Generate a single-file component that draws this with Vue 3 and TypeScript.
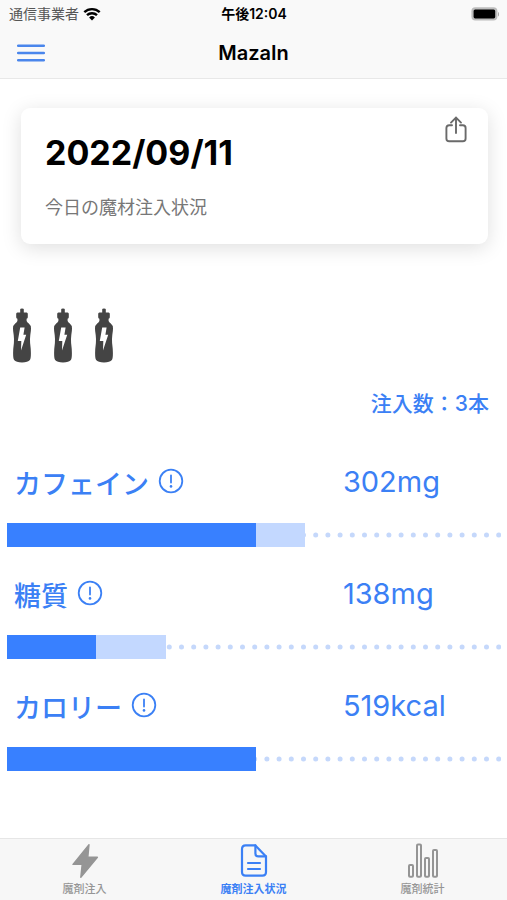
<script setup lang="ts">
interface Metric {
  id: string
  label: string
  value: string
  solid: number
  light: number
}

const metrics: Metric[] = [
  { id: 'caffeine', label: 'カフェイン', value: '302mg', solid: 50.5, light: 60.4 },
  { id: 'sugar', label: '糖質', value: '138mg', solid: 18, light: 32.1 },
  { id: 'calorie', label: 'カロリー', value: '519kcal', solid: 50.5, light: 50.5 },
]

const bottles = 3
</script>

<template>
  <div class="screen">
    <header class="top">
      <div class="status">
        <span class="carrier">
          通信事業者
          <svg class="wifi" viewBox="0 0 18 14" aria-hidden="true">
            <path d="M1.3 5.2A11.2 11.2 0 0 1 16.7 5.2" />
            <path d="M4 8.2A7.2 7.2 0 0 1 14 8.2" />
            <path class="dot" d="M9 13.4L6.1 10.4A4.2 4.2 0 0 1 11.9 10.4Z" />
          </svg>
        </span>
        <span class="clock">午後12:04</span>
        <svg class="battery" viewBox="0 0 28 14" aria-hidden="true">
          <rect x="0.4" y="0.2" width="26" height="13.4" rx="4" fill="#bcbcbc" />
          <path d="M27 5v4.4q1.2-.8 1.2-2.2T27 5z" fill="#a8a8a8" />
          <rect x="2.6" y="2.4" width="21.6" height="9" rx="1.6" fill="#000" />
        </svg>
      </div>
      <nav class="bar">
        <button class="menu" type="button" aria-label="メニュー">
          <svg viewBox="0 0 28 18" aria-hidden="true">
            <path d="M1.2 1.8H26.8M1.2 9H26.8M1.2 16.2H26.8" />
          </svg>
        </button>
        <h1>MazaIn</h1>
      </nav>
    </header>

    <main>
      <section class="card">
        <div>
          <h2>2022/09/11</h2>
          <p>今日の魔材注入状況</p>
        </div>
        <button class="share" type="button" aria-label="共有">
          <svg viewBox="0 0 22 27" aria-hidden="true">
            <path d="M7 9.2H4.2Q1.4 9.2 1.4 12V22.4Q1.4 25.2 4.2 25.2H17.8Q20.6 25.2 20.6 22.4V12Q20.6 9.2 17.8 9.2H15" />
            <path d="M11 17V1.8M6 6.6L11 1.6L16 6.6" />
          </svg>
        </button>
      </section>

      <div class="bottles">
        <svg v-for="n in bottles" :key="n" viewBox="0 0 20 55" aria-hidden="true">
          <path
            fill="#444"
            d="M8.2 1.2Q8.2 0.4 10 0.4Q11.8 0.4 11.8 1.2V4.4H14.6Q15.8 4.6 15.8 5.8V9.2Q15.8 10.4 14.6 10.8V13Q15 14.4 16.8 15.4Q19 17 19 20.4Q19 23 18.3 27Q17.8 31 18.1 35Q18.9 41 18.9 45Q18.9 50.6 17.9 52Q16 54.4 10 54.4Q4 54.4 2.1 52Q1.1 50.6 1.1 45Q1.1 41 1.9 35Q2.2 31 1.7 27Q1 23 1 20.4Q1 17 3.2 15.4Q5 14.4 5.4 13V10.8Q4.2 10.4 4.2 9.2V5.8Q4.2 4.6 5.4 4.4H8.2Z"
          />
          <path fill="#fff" d="M8.2 19.4H12.6L11.4 26.8H14.2L9 42.4L9.3 33H5.8Z" />
        </svg>
      </div>

      <p class="count">注入数：3本</p>

      <section class="metrics">
        <article v-for="m in metrics" :key="m.id" class="metric">
          <div class="row">
            <div class="name">
              <h3 :id="m.id">{{ m.label }}</h3>
              <button class="info" type="button" :aria-label="m.label">
                <svg viewBox="0 0 26 26" aria-hidden="true">
                  <circle cx="13" cy="13" r="11.3" />
                  <path d="M13 7.4V14.6" />
                  <circle class="point" cx="13" cy="18.4" r="1.3" />
                </svg>
              </button>
            </div>
            <span class="value">{{ m.value }}</span>
          </div>
          <div class="track" role="img" :aria-labelledby="m.id">
            <svg class="dots" aria-hidden="true">
              <line x1="0" y1="12" x2="100%" y2="12" />
            </svg>
            <div class="fill light" :style="{ width: m.light + '%' }"></div>
            <div class="fill solid" :style="{ width: m.solid + '%' }"></div>
          </div>
        </article>
      </section>
    </main>

    <footer class="tabs">
      <a href="#inject">
        <svg viewBox="0 0 36 36" aria-hidden="true">
          <path
            fill="currentColor"
            stroke="currentColor"
            stroke-width="1.4"
            stroke-linejoin="round"
            d="M22 1.6L6 21.4H15.2L13.8 34.4L30.4 14.2H20.8Z"
          />
        </svg>
        <span>魔剤注入</span>
      </a>
      <a href="#status" class="active" aria-current="page">
        <svg viewBox="0 0 36 36" aria-hidden="true">
          <g fill="none" stroke="currentColor" stroke-width="2.2" stroke-linejoin="round" stroke-linecap="round">
            <path d="M19.4 2.4H9.6Q6 2.4 6 6V29Q6 32.6 9.6 32.6H26.4Q30 32.6 30 29V13.4Z" />
            <path d="M19.4 2.4V10.4Q19.4 13.4 22.4 13.4H30" />
            <path d="M12 20H24M12 26H24" />
          </g>
        </svg>
        <span>魔剤注入状況</span>
      </a>
      <a href="#stats">
        <svg viewBox="0 0 36 36" aria-hidden="true">
          <g fill="none" stroke="currentColor" stroke-width="2">
            <rect x="4" y="22" width="4" height="11.8" rx="1" />
            <rect x="12" y="1.6" width="4" height="32.2" rx="1" />
            <rect x="20" y="15" width="4" height="18.8" rx="1" />
            <rect x="28" y="7" width="4" height="26.8" rx="1" />
          </g>
        </svg>
        <span>魔剤統計</span>
      </a>
    </footer>
  </div>
</template>

<style>
body {
  background: #fff;
}
</style>

<style scoped>
.screen {
  display: flex;
  flex-direction: column;
  min-height: 100vh;
  font-family: Inter, 'Noto Sans CJK JP', sans-serif;
  color: #000;
}

h1,
h2,
h3,
p {
  margin: 0;
}

button {
  display: block;
  margin: 0;
  padding: 0;
  border: 0;
  background: none;
}

svg {
  display: block;
}

.top {
  background: #f9f9f9;
  border-bottom: 1px solid #e8e8e8;
}

.status,
.bar {
  display: grid;
  grid-template-columns: 1fr auto 1fr;
  align-items: center;
}

.status {
  height: 27px;
  padding: 0 8px 0 9px;
  font-size: 14px;
  line-height: 18px;
}

.carrier {
  display: flex;
  align-items: center;
  gap: 4px;
  color: #555;
}

.wifi {
  width: 18px;
  height: 14px;
  fill: none;
  stroke: #000;
  stroke-width: 2.4;
}

.wifi .dot {
  fill: #000;
  stroke: none;
}

.clock {
  font-weight: 600;
}

.battery {
  width: 28px;
  height: 14px;
  justify-self: end;
}

.bar {
  height: 51px;
  padding: 0 17px;
}

.menu svg {
  width: 28px;
  height: 18px;
  fill: none;
  stroke: #4a86ec;
  stroke-width: 2.5;
  stroke-linecap: round;
}

h1 {
  font-size: 20px;
  font-weight: 600;
}

main {
  flex: 1;
}

.card {
  display: flex;
  justify-content: space-between;
  align-items: flex-start;
  margin: 29px 19px 0 21px;
  padding: 8px 21px 23px 24px;
  border-radius: 9px;
  background: #fff;
  box-shadow: 0 4px 20px rgba(0, 0, 0, 0.13);
}

h2 {
  padding-top: 16px;
  font-size: 34px;
  line-height: 42px;
  font-weight: 700;
}

.card p {
  padding-top: 21px;
  font-size: 18px;
  line-height: 26px;
  color: #777;
}

.share svg {
  width: 22px;
  height: 27px;
  fill: none;
  stroke: #6a6a6a;
  stroke-width: 1.9;
  stroke-linecap: round;
}

.bottles {
  display: flex;
  gap: 21px;
  padding: 64px 12px 0;
}

.bottles svg {
  width: 20px;
  height: 55px;
}

.count {
  padding: 29px 18px 52px;
  font-size: 21px;
  line-height: 24px;
  font-weight: 500;
  text-align: right;
  color: #3b80f5;
}

.metrics {
  display: grid;
  gap: 33px;
  padding: 0 6px 33px 7px;
  color: #3b80f5;
}

.row {
  display: grid;
  grid-template-columns: 68% 32%;
  align-items: start;
  padding-bottom: 21px;
}

.name {
  display: flex;
  align-items: flex-start;
  gap: 9px;
  padding-left: 7px;
}

h3 {
  font-size: 27px;
  line-height: 34px;
  font-weight: 500;
}

.info svg {
  width: 26px;
  height: 26px;
  fill: none;
  stroke: #3b80f5;
  stroke-width: 1.8;
  stroke-linecap: round;
}

.info .point {
  fill: #3b80f5;
  stroke: none;
}

.value {
  font-size: 29px;
  line-height: 28px;
}

.track {
  position: relative;
  height: 24px;
}

.dots {
  width: 100%;
  height: 24px;
}

.dots line {
  stroke: #c5d8fb;
  stroke-width: 5;
  stroke-linecap: round;
  stroke-dasharray: 0 12.2;
  stroke-dashoffset: -3.7;
}

.fill {
  position: absolute;
  top: 0;
  left: 0;
  height: 100%;
}

.light {
  background: #c3d8ff;
}

.solid {
  background: #3880ff;
}

.tabs {
  display: grid;
  grid-template-columns: repeat(3, 1fr);
  border-top: 1px solid #e6e6e6;
  background: #f7f7f7;
}

.tabs a {
  display: grid;
  justify-items: center;
  padding: 4px 0 1px;
  font-size: 11px;
  line-height: 20px;
  font-weight: 500;
  color: #959595;
  text-decoration: none;
}

.tabs a.active {
  font-weight: 700;
  color: #3b80f5;
}

.tabs svg {
  width: 36px;
  height: 36px;
}
</style>
